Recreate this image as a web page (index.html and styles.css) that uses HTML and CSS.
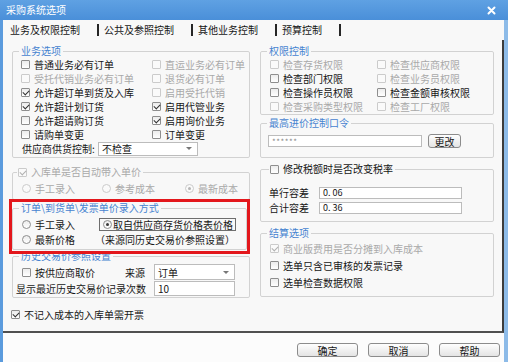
FILE: index.html
```html
<!DOCTYPE html>
<html lang="zh-CN">
<head>
  <meta charset="UTF-8" />
  <title>采购系统选项</title>
  <link rel="stylesheet" href="styles.css">
</head>
<body>
  <div class="window">
    <div class="titlebar">
      <span class="title">采购系统选项</span>
      <svg class="close" width="9" height="9" viewBox="0 0 9 9"><path d="M1.5 1.5 L7.5 7.5 M7.5 1.5 L1.5 7.5" stroke="#fff" stroke-width="2" stroke-linecap="round"/></svg>
    </div>
    <div class="frame">
      <div class="tabs">
        <span class="tab first">业务及权限控制</span>
        <span class="tab">公共及参照控制</span>
        <span class="tab">其他业务控制</span>
        <span class="tab">预算控制</span>
      </div>

      <div class="page">
        <!-- left column -->
        <div class="col">
          <fieldset class="grp g-biz">
            <legend>业务选项</legend>
            <div class="body">
              <div class="opts">
                <label class="chk"><i class="cb"></i>普通业务必有订单</label>
                <label class="chk dis"><i class="cb"></i>直运业务必有订单</label>
                <label class="chk dis"><i class="cb"></i>受托代销业务必有订单</label>
                <label class="chk dis"><i class="cb"></i>退货必有订单</label>
                <label class="chk"><i class="cb on"></i>允许超订单到货及入库</label>
                <label class="chk dis"><i class="cb"></i>启用受托代销</label>
                <label class="chk"><i class="cb on"></i>允许超计划订货</label>
                <label class="chk"><i class="cb on"></i>启用代管业务</label>
                <label class="chk"><i class="cb"></i>允许超请购订货</label>
                <label class="chk"><i class="cb on"></i>启用询价业务</label>
                <label class="chk"><i class="cb"></i>请购单变更</label>
                <label class="chk"><i class="cb"></i>订单变更</label>
              </div>
              <div class="supply-row">
                <span class="supply-label">供应商供货控制:</span>
                <span class="select supply-select">不检查<i class="arrow"></i></span>
              </div>
            </div>
          </fieldset>

          <fieldset class="grp g-auto">
            <legend class="dis"><i class="cb on"></i>入库单是否自动带入单价</legend>
            <div class="body">
              <div class="radios3">
                <label class="chk dis"><i class="rd"></i>手工录入</label>
                <label class="chk dis"><i class="rd"></i>参考成本</label>
                <label class="chk dis"><i class="rd on"></i>最新成本</label>
              </div>
            </div>
          </fieldset>

          <div class="mark">
            <fieldset class="grp g-entry">
              <legend>订单\到货单\发票单价录入方式</legend>
              <div class="body">
                <div class="entry-grid">
                  <label class="chk"><i class="rd"></i>手工录入</label>
                  <label class="chk focus-box"><i class="rd on"></i>取自供应商存货价格表价格</label>
                  <label class="chk"><i class="rd"></i>最新价格</label>
                  <span class="note">（来源同历史交易价参照设置）</span>
                </div>
              </div>
            </fieldset>
          </div>

          <fieldset class="grp g-hist">
            <legend>历史交易价参照设置</legend>
            <div class="body">
              <div class="hist-grid">
                <label class="chk hist-chk"><i class="cb"></i>按供应商取价</label>
                <span>来源</span>
                <span class="select">订单<i class="arrow"></i></span>
                <span class="hist-count">显示最近历史交易价记录次数</span>
                <span class="txt">10</span>
              </div>
            </div>
          </fieldset>

          <label class="chk solo"><i class="cb on"></i>不记入成本的入库单需开票</label>
        </div>

        <!-- right column -->
        <div class="col">
          <fieldset class="grp g-perm">
            <legend>权限控制</legend>
            <div class="body">
              <div class="opts opts-r">
                <label class="chk dis"><i class="cb"></i>检查存货权限</label>
                <label class="chk dis"><i class="cb"></i>检查供应商权限</label>
                <label class="chk"><i class="cb"></i>检查部门权限</label>
                <label class="chk dis"><i class="cb"></i>检查业务员权限</label>
                <label class="chk"><i class="cb"></i>检查操作员权限</label>
                <label class="chk"><i class="cb"></i>检查金额审核权限</label>
                <label class="chk dis"><i class="cb"></i>检查采购类型权限</label>
                <label class="chk dis"><i class="cb"></i>检查工厂权限</label>
              </div>
            </div>
          </fieldset>

          <fieldset class="grp g-pwd">
            <legend>最高进价控制口令</legend>
            <div class="body">
              <div class="pwd-row">
                <span class="txt pwd">******</span>
                <span class="btn small">更改</span>
              </div>
            </div>
          </fieldset>

          <fieldset class="grp g-tax">
            <legend class="plain"><i class="cb"></i>修改税额时是否改变税率</legend>
            <div class="body">
              <div class="tol-row"><span class="tol-label">单行容差</span><span class="txt tol">0. 06</span></div>
              <div class="tol-row"><span class="tol-label">合计容差</span><span class="txt tol">0. 36</span></div>
            </div>
          </fieldset>

          <fieldset class="grp g-settle">
            <legend>结算选项</legend>
            <div class="body">
              <label class="chk dis"><i class="cb on"></i>商业版费用是否分摊到入库成本</label>
              <label class="chk"><i class="cb"></i>选单只含已审核的发票记录</label>
              <label class="chk"><i class="cb"></i>选单检查数据权限</label>
            </div>
          </fieldset>
        </div>
      </div>

      <div class="footer">
        <span class="btn">确定</span>
        <span class="btn">取消</span>
        <span class="btn">帮助</span>
      </div>
    </div>
  </div>
</body>
</html>
```

FILE: styles.css
```css
* { margin: 0; padding: 0; box-sizing: border-box; }
html, body { width: 508px; height: 362px; overflow: hidden; }
body {
  font-family: "Noto Sans CJK SC", "Microsoft YaHei", sans-serif;
  font-size: 10px;
  color: #161616;
  background: #fbfbfb;
}

.window {
  height: 362px;
  display: flex;
  flex-direction: column;
}

.titlebar {
  height: 20px;
  flex: none;
  display: flex;
  align-items: center;
  justify-content: space-between;
  padding: 0 12px 0 6px;
  background: linear-gradient(#5fa1e3, #4a8fd9);
  color: #fff;
}

.title { line-height: 12px; }

.frame {
  flex: 1;
  display: flex;
  flex-direction: column;
  border-left: 3px solid #5b9bdd;
  border-right: 4px solid #8dbbe8;
  background: #f8f8f8;
}

/* tab strip */
.tabs {
  height: 20px;
  display: flex;
  align-items: center;
  padding-left: 7px;
}

.tab {
  padding: 0 17px 0 5px;
  line-height: 12px;
  border-right: 2px solid #262626;
}

.tab.first { padding-left: 0; }

/* tab page */
.page {
  height: 293px;
  display: flex;
  gap: 10px;
  padding: 5px 8px 0 9px;
  border-right: 2px solid #3c3c3c;
  border-bottom: 2px solid #505050;
}

.col {
  display: flex;
  flex-direction: column;
}

.col:first-child { width: 238px; }
.col:last-child { width: 234px; }

/* group boxes */
.grp {
  border: 1px solid #d2d2d2;
  border-radius: 2px;
  min-width: 0;
}

.grp legend {
  margin-left: 6px;
  padding: 0 2px;
  line-height: 12px;
  color: #4683d0;
  display: flex;
  align-items: center;
}

.grp legend.dis { color: #a9a9a9; margin-left: 4px; padding: 0 2px 0 1px; }
.grp legend.plain { color: #161616; margin-left: 8px; padding: 0 2px 0 1px; }

/* checkboxes & radios */
.chk {
  display: flex;
  align-items: center;
  white-space: nowrap;
}

.dis { color: #a9a9a9; }

.cb {
  flex: none;
  width: 9px;
  height: 9px;
  margin-right: 4px;
  border: 1px solid #8e8e8e;
  border-radius: 1px;
  background: linear-gradient(#ececec, #fff);
  position: relative;
}

.cb.on::after {
  content: "";
  position: absolute;
  left: 2px;
  top: 0;
  width: 3px;
  height: 5px;
  border: solid #333;
  border-width: 0 1.5px 1.5px 0;
  transform: rotate(45deg);
}

.dis .cb { border-color: #cbcbcb; background: #fafafa; }
.dis .cb.on::after { border-color: #b0b0b0; }

.rd {
  flex: none;
  width: 9px;
  height: 9px;
  margin-right: 4px;
  border: 1px solid #8e8e8e;
  border-radius: 50%;
  background: linear-gradient(#ececec, #fff);
  display: flex;
  align-items: center;
  justify-content: center;
}

.rd.on::after {
  content: "";
  width: 3px;
  height: 3px;
  border-radius: 50%;
  background: #3a3a3a;
}

.dis .rd { border-color: #cbcbcb; background: #fafafa; }
.dis .rd.on::after { background: #b5b5b5; }

/* inputs */
.select, .txt {
  background: #fff;
  border: 1px solid #bcbcbc;
  display: flex;
  align-items: center;
  padding-left: 3px;
}

.select { justify-content: space-between; padding-right: 5px; }

.arrow {
  width: 0;
  height: 0;
  border-left: 3px solid transparent;
  border-right: 3px solid transparent;
  border-top: 3px solid #777;
}

.btn {
  width: 61px;
  height: 14px;
  display: flex;
  align-items: center;
  justify-content: center;
  border: 1px solid #8c8c8c;
  border-radius: 3px;
  background: linear-gradient(#fefefe, #e4e4e4);
}

.btn.small { width: 33px; margin-left: 6px; }

/* left: business options */
.g-biz .body { padding: 0 0 1px 8px; }

.opts {
  display: grid;
  grid-template-columns: 131px 1fr;
  grid-auto-rows: 14px;
}

.supply-row {
  height: 15px;
  display: flex;
  align-items: center;
  padding-left: 1px;
}

.supply-label { width: 76px; }
.supply-select { width: 100px; height: 14px; }

/* left: auto unit price */
.g-auto { margin-top: 8px; }
.g-auto .body { padding: 3px 0 4px 9px; }

.radios3 {
  display: grid;
  grid-template-columns: 80px 83px auto;
  height: 14px;
}

/* left: highlighted price entry group */
.mark {
  position: relative;
  z-index: 1;
  margin: -1px 0 0 -3px;
  padding-bottom: 1px;
  border: 3px solid #e3171c;
}

.g-entry .body { padding: 3px 0 2px 9px; }

.entry-grid {
  display: grid;
  grid-template-columns: 77px auto;
  grid-auto-rows: 15px;
  align-items: center;
}

.focus-box {
  height: 13px;
  width: 137px;
  padding-left: 3px;
  border: 1px solid #6e6e6e;
}

.focus-box .rd { margin-right: 1px; }

.note { margin-left: -4px; }

/* left: history price */
.g-hist { margin-top: -4px; }
.g-hist .body { padding: 2px 0 1px 3px; }

.hist-grid {
  display: grid;
  grid-template-columns: 109px 29px 81px;
  grid-template-rows: 16px 15px;
  row-gap: 1px;
  align-items: center;
}

.hist-grid .select, .hist-grid .txt { height: 100%; }
.hist-chk { padding-left: 6px; }
.hist-count { grid-column: span 2; }

.solo { margin: 9px 0 0 -1px; height: 14px; }

/* right: permissions */
.g-perm .body { padding: 0 0 1px 9px; }
.opts-r { grid-template-columns: 107px 1fr; }

.g-pwd { margin-top: 2px; }
.g-pwd .body { padding: 5px 0 9px 7px; }

.pwd-row {
  height: 14px;
  display: flex;
  align-items: center;
}

.pwd {
  width: 154px;
  height: 12px;
  color: #8a8a8a;
  font-size: 8px;
  letter-spacing: 0.5px;
}

.g-tax { margin-top: 5px; }
.g-tax .body { padding: 10px 0 6px 8px; }

.tol-row {
  height: 15px;
  display: flex;
  align-items: center;
}

.tol-label { width: 50px; }
.tol { width: 143px; height: 12px; font-size: 9px; }

.g-settle { margin-top: 5px; }
.g-settle .body { padding: 1px 0 5px 9px; }
.g-settle .chk { height: 17px; }

/* buttons */
.footer {
  flex: 1;
  display: flex;
  justify-content: flex-end;
  gap: 10px;
  padding: 10px 4px 0 0;
  background: #fcfcfc;
}
```
